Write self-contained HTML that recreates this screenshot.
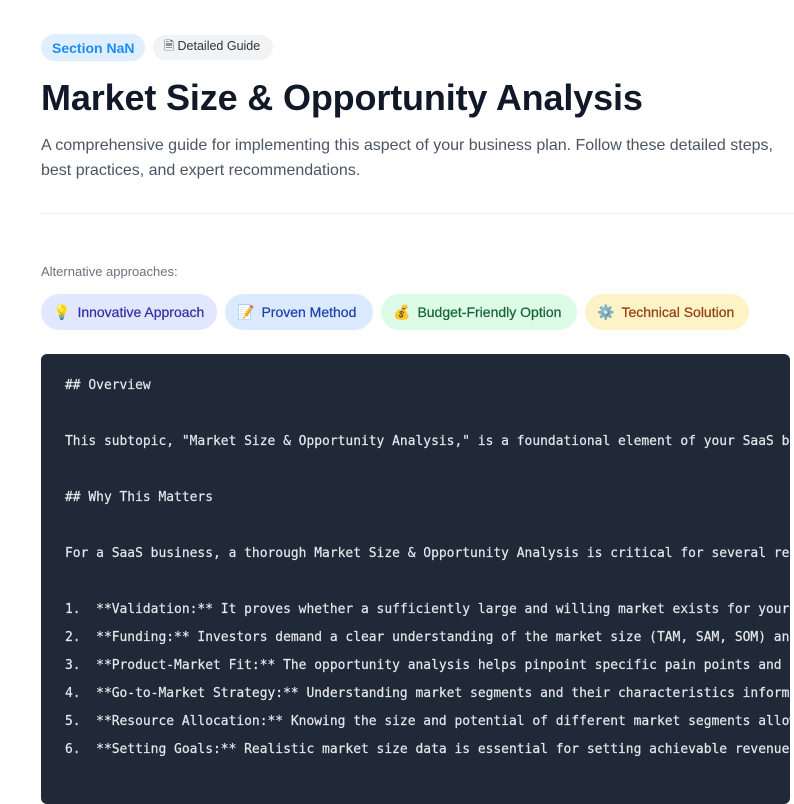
<!DOCTYPE html>
<html><head><meta charset="utf-8"><style>
body{margin:0;background:#fff;font-family:"Liberation Sans",sans-serif;width:794px;height:788px;overflow:hidden;position:relative}
.b{position:absolute;border-radius:14px;font-size:13px;display:flex;align-items:center;white-space:nowrap}
.pill{position:absolute;top:294px;height:36px;border-radius:18px;font-size:14px;display:flex;align-items:center;padding:0 12px;box-sizing:border-box;-webkit-text-stroke:0.25px currentColor;white-space:nowrap}
.pill span.i{margin-right:7px;font-size:14px;-webkit-text-stroke:0}
pre{position:absolute;left:41px;top:354px;width:749px;height:450px;margin:0;background:#1f2937;border-radius:6px;color:#e5e7eb;font-family:"DejaVu Sans Mono","Liberation Mono",monospace;font-size:12.95px;line-height:28px;padding:18px 0 0 24px;box-sizing:border-box;overflow:hidden;white-space:pre;-webkit-text-stroke:0.2px #e5e7eb}
</style></head><body>
<div class="b" style="left:41px;top:34px;height:27px;padding:0 11px;background:#e0efff;color:#1d8cf8;font-size:14px;font-weight:bold">Section NaN</div>
<div class="b" style="left:153px;top:35px;height:25px;padding:0 11px;width:120px;box-sizing:border-box;background:#f1f3f5;color:#333;font-size:12.5px">🗎&nbsp;Detailed Guide</div>
<div style="position:absolute;left:41px;top:77px;font-size:36px;font-weight:bold;color:#111827;letter-spacing:-0.15px">Market Size &amp; Opportunity Analysis</div>
<div style="position:absolute;left:41px;top:133px;width:760px;font-size:16px;line-height:25px;color:#4b5563">A comprehensive guide for implementing this aspect of your business plan. Follow these detailed steps, best practices, and expert recommendations.</div>
<div style="position:absolute;left:41px;top:213px;width:760px;height:1px;background:#eceef1"></div>
<div style="position:absolute;left:41px;top:264px;font-size:13px;color:#6b7280">Alternative approaches:</div>
<div class="pill" style="left:41px;width:176px;background:#e0e7ff;color:#3730a3"><span class="i">💡</span>Innovative Approach</div>
<div class="pill" style="left:225px;width:148px;background:#dbeafe;color:#1e40af"><span class="i">📝</span>Proven Method</div>
<div class="pill" style="left:381px;width:196px;background:#dcfce7;color:#166534"><span class="i">💰</span>Budget-Friendly Option</div>
<div class="pill" style="left:585px;width:164px;background:#fef3c7;color:#92400e"><span class="i">⚙️</span>Technical Solution</div>
<pre>## Overview

This subtopic, "Market Size &amp; Opportunity Analysis," is a foundational element of your SaaS business plan.

## Why This Matters

For a SaaS business, a thorough Market Size &amp; Opportunity Analysis is critical for several reasons:

1.  **Validation:** It proves whether a sufficiently large and willing market exists for your product.
2.  **Funding:** Investors demand a clear understanding of the market size (TAM, SAM, SOM) and growth.
3.  **Product-Market Fit:** The opportunity analysis helps pinpoint specific pain points and needs.
4.  **Go-to-Market Strategy:** Understanding market segments and their characteristics informs strategy.
5.  **Resource Allocation:** Knowing the size and potential of different market segments allows focus.
6.  **Setting Goals:** Realistic market size data is essential for setting achievable revenue targets.
</pre>
</body></html>
